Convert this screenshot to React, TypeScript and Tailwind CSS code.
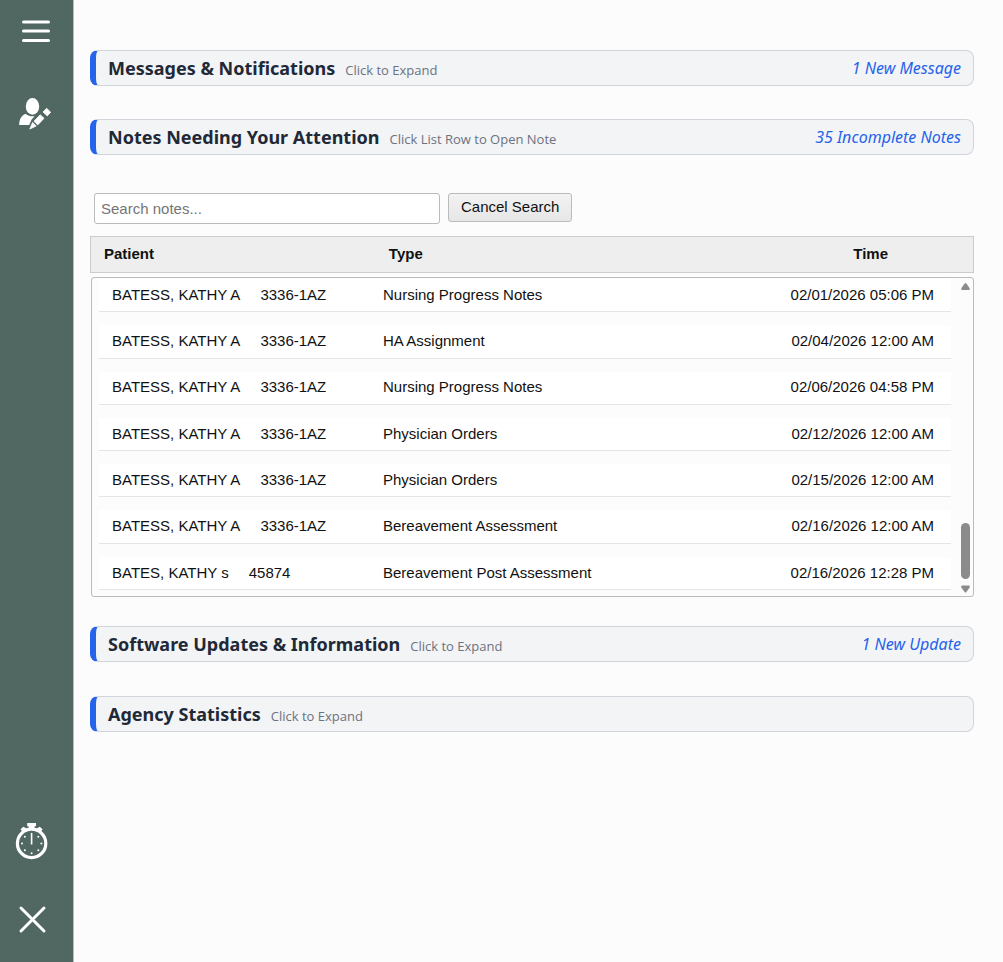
import { useState } from "react";

interface Note {
  patient: string;
  mrn: string;
  type: string;
  time: string;
}

const NOTES: Note[] = [
  { patient: "BATESS, KATHY A", mrn: "3336-1AZ", type: "Nursing Progress Notes", time: "02/01/2026 05:06 PM" },
  { patient: "BATESS, KATHY A", mrn: "3336-1AZ", type: "HA Assignment", time: "02/04/2026 12:00 AM" },
  { patient: "BATESS, KATHY A", mrn: "3336-1AZ", type: "Nursing Progress Notes", time: "02/06/2026 04:58 PM" },
  { patient: "BATESS, KATHY A", mrn: "3336-1AZ", type: "Physician Orders", time: "02/12/2026 12:00 AM" },
  { patient: "BATESS, KATHY A", mrn: "3336-1AZ", type: "Physician Orders", time: "02/15/2026 12:00 AM" },
  { patient: "BATESS, KATHY A", mrn: "3336-1AZ", type: "Bereavement Assessment", time: "02/16/2026 12:00 AM" },
  { patient: "BATES, KATHY s", mrn: "45874", type: "Bereavement Post Assessment", time: "02/16/2026 12:28 PM" },
];

function MenuIcon() {
  return (
    <svg width="32" height="28" viewBox="0 0 32 28" stroke="#fff" strokeWidth="3" strokeLinecap="round" aria-hidden="true">
      <path d="M3.5 5H28.5M3.5 14H28.5M3.5 23.5H28.5" />
    </svg>
  );
}

function UserPenIcon() {
  return (
    <svg width="33" height="32" viewBox="0 0 33 32" fill="#fff" aria-hidden="true">
      <ellipse cx="13.5" cy="8.4" rx="6.7" ry="8.4" />
      <path d="M0.2 27C0.2 21.5 2.2 17.6 6.6 15.8C9 17.8 12 18.6 15.6 18.3L12.6 21.4L10.2 27Z" />
      <g stroke="#fff" strokeWidth="0.8" strokeLinejoin="round">
        <path d="M27.6 10.3L31.7 14.2L28.3 17.9L24 13.9Z" />
        <path d="M21.2 16.8L25 20.3L18.8 26.9L15 23.2Z" />
        <path d="M13.6 24.4L17.2 28L10.8 31Z" />
      </g>
    </svg>
  );
}

function StopwatchIcon() {
  return (
    <svg width="34" height="40" viewBox="0 0 34 40" fill="#fff" aria-hidden="true">
      <path d="M12.2 2H21V5.2H19.6V8.6H13.6V5.2H12.2Z" />
      <path d="M5.6 8.3L8.4 5.7L12.6 8L8 11.5ZM27.6 8.3L24.8 5.7L20.6 8L25.2 11.5Z" />
      <circle cx="16.6" cy="22.4" r="14.2" fill="none" stroke="#fff" strokeWidth="3.2" />
      <path d="M15.8 12.2Q16.6 11.4 17.4 12.2V23.6H15.8Z" />
      <circle cx="7" cy="22.5" r="1" />
      <circle cx="26.4" cy="22.5" r="1" />
      <circle cx="9.9" cy="15.8" r="1" />
      <circle cx="23.3" cy="15.8" r="1" />
      <circle cx="9.9" cy="29.2" r="1" />
      <circle cx="23.3" cy="29.2" r="1" />
      <circle cx="16.6" cy="32.2" r="1" />
    </svg>
  );
}

function CloseIcon() {
  return (
    <svg width="32" height="32" viewBox="0 0 32 32" stroke="#fff" strokeWidth="3" strokeLinecap="round" aria-hidden="true">
      <path d="M5 4L28 27M28 4L5 27" />
    </svg>
  );
}

function Sidebar() {
  return (
    <nav className="flex w-[74px] shrink-0 flex-col items-start border-r border-[#b5bfbb] bg-[#516762] px-4 pt-[17px] pb-[26px]">
      <button type="button" aria-label="Menu" className="ml-1">
        <MenuIcon />
      </button>
      <button type="button" aria-label="Edit profile" className="mt-[53px] ml-[3px]">
        <UserPenIcon />
      </button>
      <button type="button" aria-label="Timer" className="mt-auto -ml-px">
        <StopwatchIcon />
      </button>
      <button type="button" aria-label="Close" className="mt-[43px]">
        <CloseIcon />
      </button>
    </nav>
  );
}

interface SectionHeaderProps {
  title: string;
  hint: string;
  status?: string;
}

function SectionHeader({ title, hint, status }: SectionHeaderProps) {
  return (
    <button
      type="button"
      className="flex h-9 w-full items-center justify-between rounded-lg border border-l-6 border-[#d1d5db] border-l-[#2563eb] bg-[#f3f4f6] px-3 font-['Noto_Sans',sans-serif]"
    >
      <span className="flex items-baseline gap-[10px]">
        <span className="text-lg font-bold text-[#1f2937]">{title}</span>
        <span className="font-['Open_Sans',sans-serif] text-[13px] text-[#6b7280]">{hint}</span>
      </span>
      {status && <span className="text-base text-[#2563eb] italic">{status}</span>}
    </button>
  );
}

/** Slim overlay scrollbar drawn at the right edge of the list. */
function ScrollRail() {
  return (
    <div className="absolute inset-y-0 right-[3px] flex w-[9px] flex-col items-center py-[3px]" aria-hidden="true">
      <svg width="9" height="10" viewBox="0 0 10 10" preserveAspectRatio="none" fill="#8b8b8b">
        <path d="M4 2.6Q5 1.4 6 2.6L9.6 7.2Q10.2 9 8.8 9H1.2Q-0.2 9 0.4 7.2Z" />
      </svg>
      <div className="mt-auto mb-[6px] h-14 w-[9px] rounded-full bg-[#8b8b8b]" />
      <svg width="9" height="8" viewBox="0 0 10 8" preserveAspectRatio="none" fill="#8b8b8b">
        <path d="M4 7Q5 8.2 6 7L9.6 2.4Q10.2 0.6 8.8 0.6H1.2Q-0.2 0.6 0.4 2.4Z" />
      </svg>
    </div>
  );
}

function NotesList({ notes }: { notes: Note[] }) {
  return (
    <>
      <table className="mt-3 w-full table-fixed border border-[#ccc] bg-[#eee]" aria-label="Note columns">
        <thead>
          <tr className="h-9 text-left font-bold">
            <th className="w-1/3 pl-[13px]">Patient</th>
            <th className="w-1/3 pl-1">Type</th>
            <th className="w-1/3 pr-[85px] text-right">Time</th>
          </tr>
        </thead>
      </table>
      <div className="relative mt-1 ml-px h-80 overflow-hidden rounded-[3px] border border-[#bbb] pr-[22px] pl-[7px]">
        <table className="-mt-3 h-[337px] w-full table-fixed border-separate border-spacing-x-0 border-spacing-y-[13px]" aria-label="Notes">
          <tbody>
            {notes.map((n) => (
              <tr key={n.time} className="cursor-pointer bg-white">
                <td className="w-1/3 border-b border-[#e5e5e5] pl-[13px]">
                  {n.patient}
                  <span className="ml-5">{n.mrn}</span>
                </td>
                <td className="w-1/3 border-b border-[#e5e5e5]">{n.type}</td>
                <td className="w-1/3 border-b border-[#e5e5e5] pr-[17px] text-right">{n.time}</td>
              </tr>
            ))}
          </tbody>
        </table>
        <ScrollRail />
      </div>
    </>
  );
}

export default function App() {
  const [query, setQuery] = useState("");
  const visible = NOTES.filter((n) => `${n.patient} ${n.mrn} ${n.type}`.toLowerCase().includes(query.toLowerCase()));

  return (
    <div className="flex min-h-screen bg-[#fcfcfc] font-['Liberation_Sans',Arial,sans-serif] text-[15px] text-[#111]">
      <Sidebar />
      <main className="min-w-0 flex-1 pt-[50px] pr-[29px] pl-4">
        <div className="flex flex-col gap-[33px]">
          <SectionHeader title="Messages & Notifications" hint="Click to Expand" status="1 New Message" />
          <SectionHeader title="Notes Needing Your Attention" hint="Click List Row to Open Note" status="35 Incomplete Notes" />
        </div>

        <div className="mt-[38px] ml-1 flex items-start gap-2">
          <input
            type="text"
            aria-label="Search notes"
            placeholder="Search notes..."
            value={query}
            onChange={(e) => setQuery(e.target.value)}
            className="h-[31px] w-[346px] rounded-[3px] border border-[#bbb] bg-white px-[6px] placeholder:text-[#757575]"
          />
          <button
            type="button"
            onClick={() => setQuery("")}
            className="h-[29px] rounded-[3px] border border-[#bbb] bg-linear-to-b from-[#f3f3f3] to-[#e6e6e6] px-3"
          >
            Cancel Search
          </button>
        </div>

        <NotesList notes={visible} />

        <div className="mt-[29px] flex flex-col gap-[34px]">
          <SectionHeader title="Software Updates & Information" hint="Click to Expand" status="1 New Update" />
          <SectionHeader title="Agency Statistics" hint="Click to Expand" />
        </div>
      </main>
    </div>
  );
}
